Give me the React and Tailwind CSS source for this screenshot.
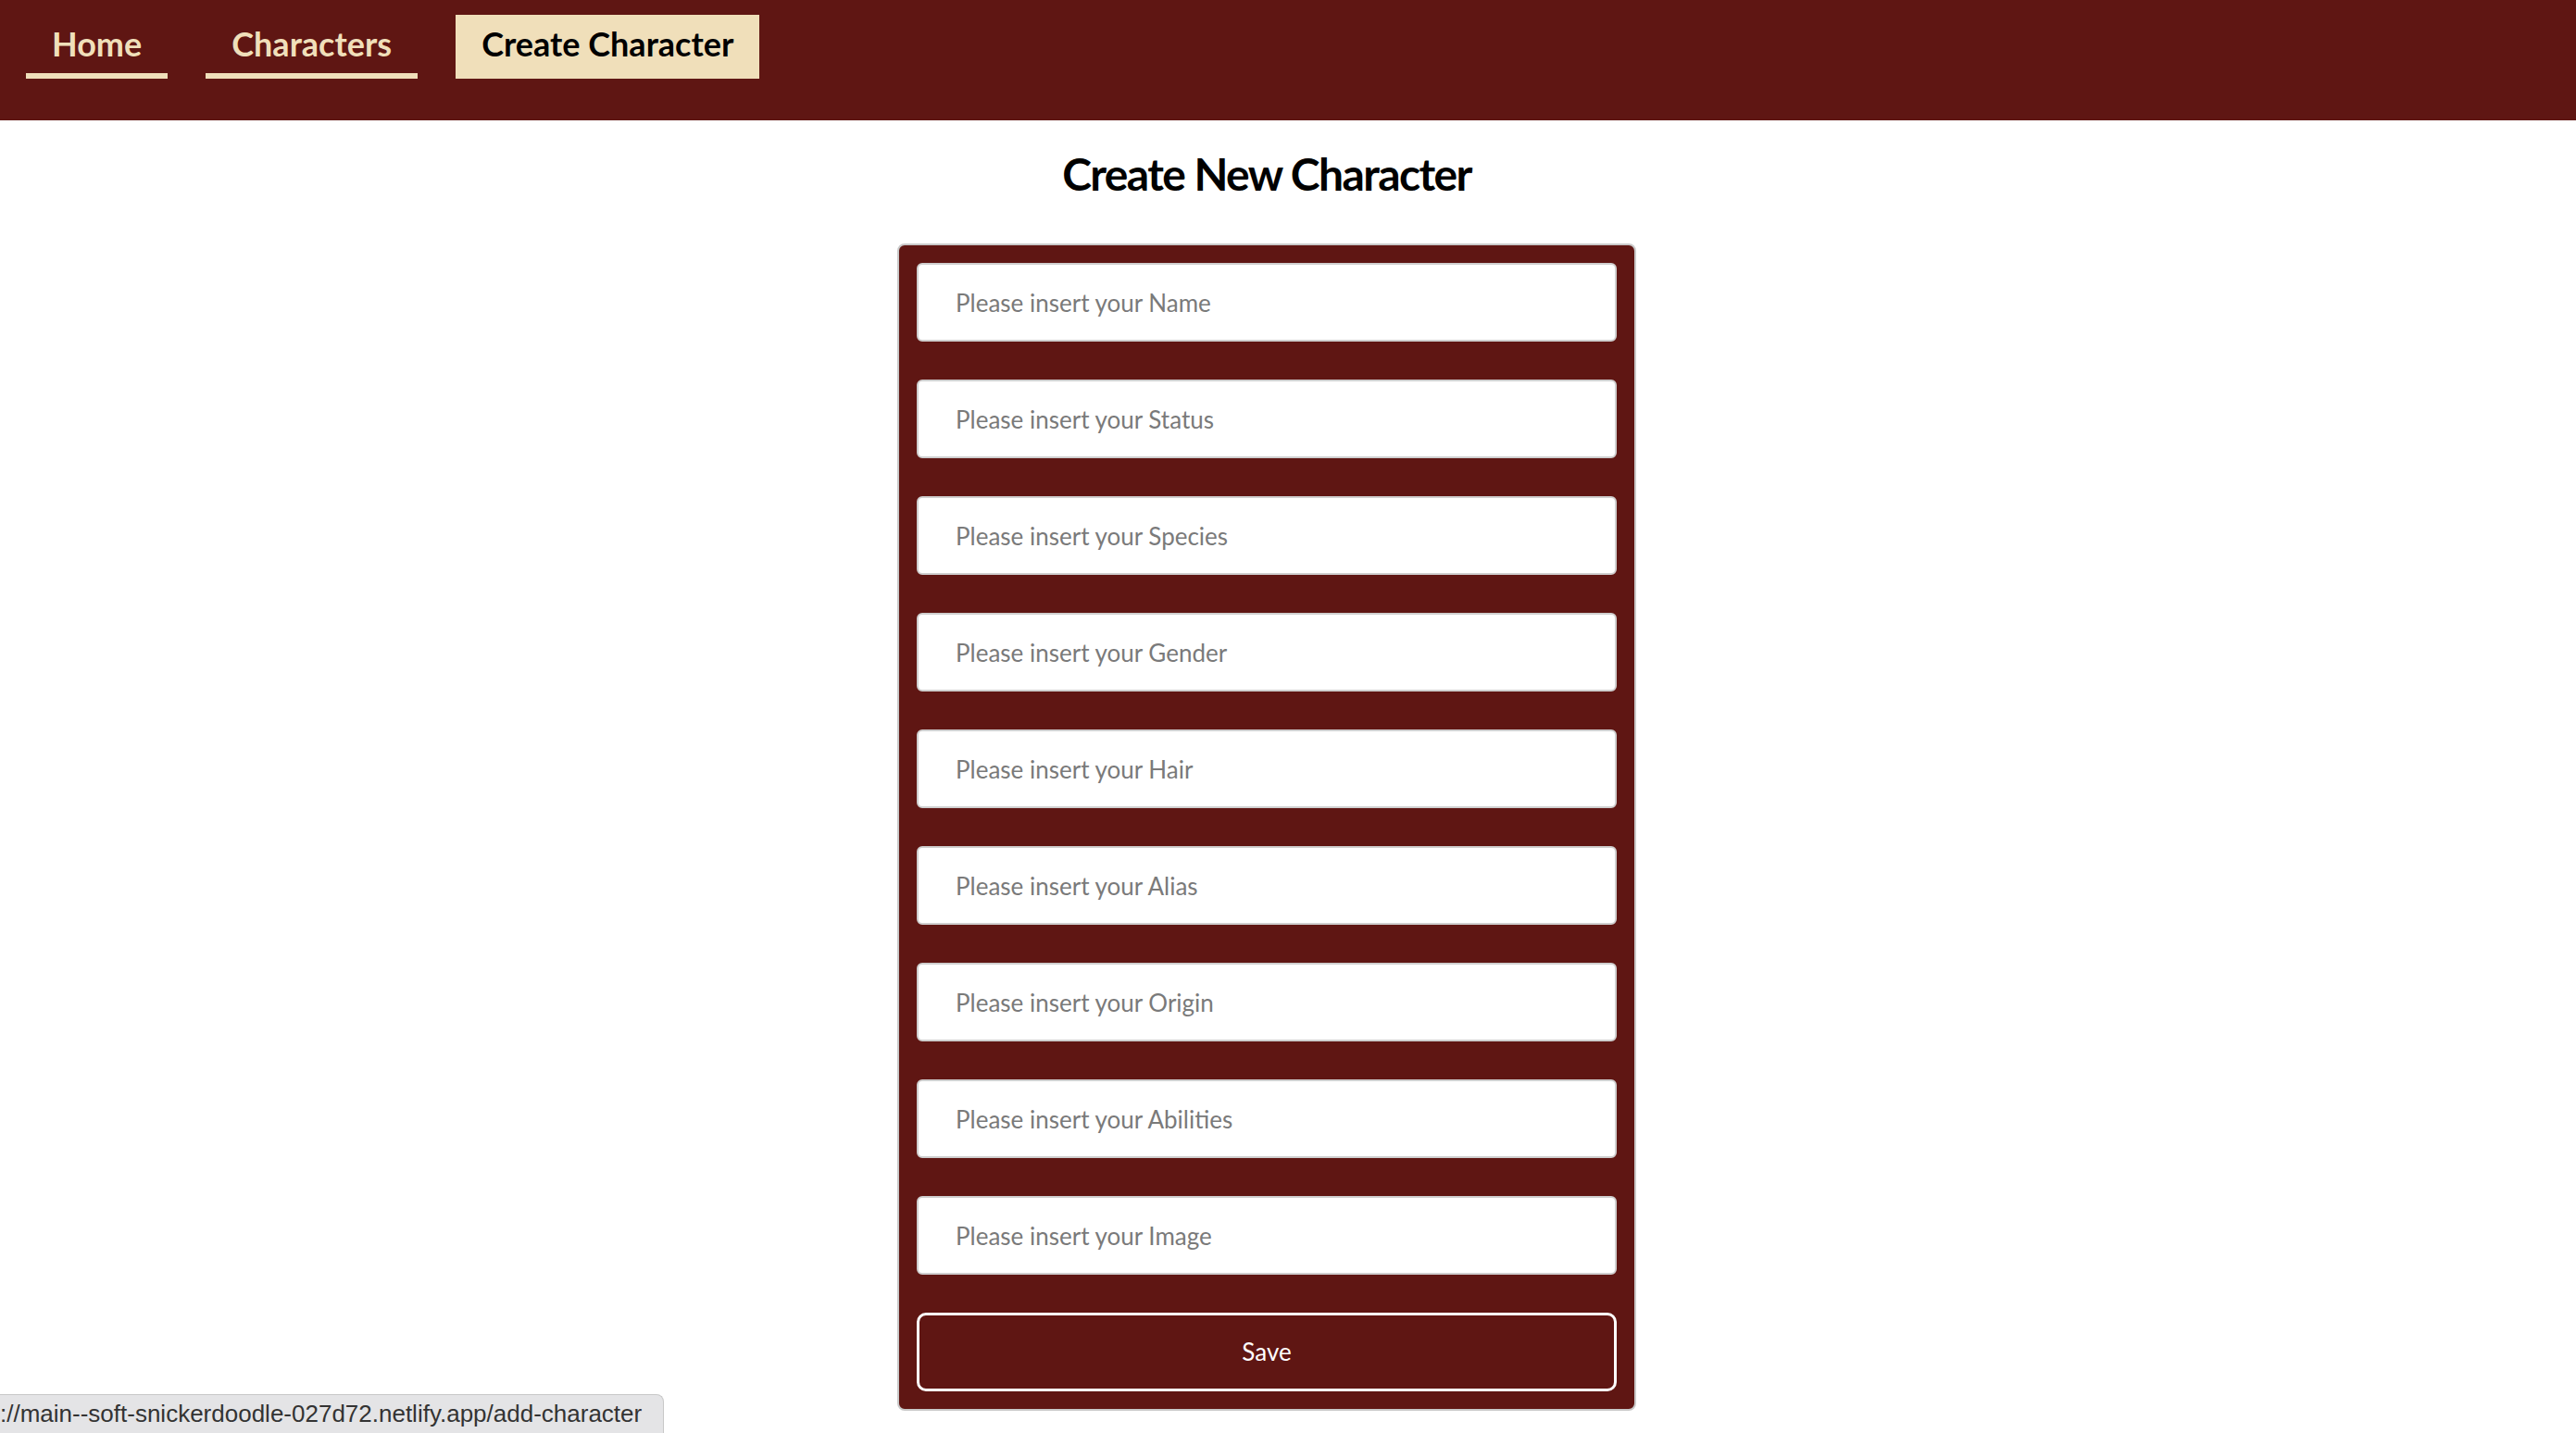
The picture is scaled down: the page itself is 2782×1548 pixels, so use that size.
import React from "react";

const fields = ["Name", "Status", "Species", "Gender", "Hair", "Alias", "Origin", "Abilities", "Image"];

const NavLink = ({ label, active }) => (
  <a
    href="#"
    className={
      active
        ? "flex h-[69px] items-center bg-[#f0dfba] px-[28px] pb-[8px] text-[36px] font-bold text-black"
        : "flex h-[69px] items-center border-b-[6px] border-[#f0dfba] px-[28px] pb-[2px] text-[36px] font-bold text-[#f0dfba]"
    }
  >
    {label}
  </a>
);

export default function App() {
  return (
    <div className="relative min-h-screen bg-white font-['Lato','Open_Sans',sans-serif]">
      {/* Top navigation */}
      <nav className="flex h-[130px] items-start gap-[41px] bg-[#5f1613] px-[28px] pt-[16px]">
        <NavLink label="Home" />
        <NavLink label="Characters" />
        <NavLink label="Create Character" active />
      </nav>

      <main className="flex flex-col items-center pr-[46px]">
        <h1 className="mt-[34px] text-[48px] font-bold leading-[48px] tracking-[-1.6px] text-black">
          Create New Character
        </h1>

        <form
          onSubmit={(e) => e.preventDefault()}
          className="mt-[51px] flex w-[798px] flex-col gap-[41px] rounded-[8px] border-2 border-[#c9c9c9] bg-[#5f1613] p-[19px]"
        >
          {fields.map((f) => (
            <input
              key={f}
              type="text"
              placeholder={`Please insert your ${f}`}
              className="h-[85px] w-full rounded-[6px] border-2 border-[#cfcfcf] bg-white px-[40px] text-[26px] text-black outline-none placeholder:text-[#7a7a7a]"
            />
          ))}
          <button
            type="submit"
            className="h-[85px] w-full rounded-[10px] border-[3px] border-white bg-transparent text-[26px] text-white"
          >
            Save
          </button>
        </form>
      </main>

      {/* Browser link-hover status bubble */}
      <div className="absolute bottom-0 left-0 flex h-[42px] w-[717px] items-center rounded-tr-[8px] border border-l-0 border-b-0 border-[#c8c8c8] bg-[#e4e4e6] font-['Liberation_Sans',sans-serif] text-[26px] text-[#333]">
        ://main--soft-snickerdoodle-027d72.netlify.app/add-character
      </div>
    </div>
  );
}
